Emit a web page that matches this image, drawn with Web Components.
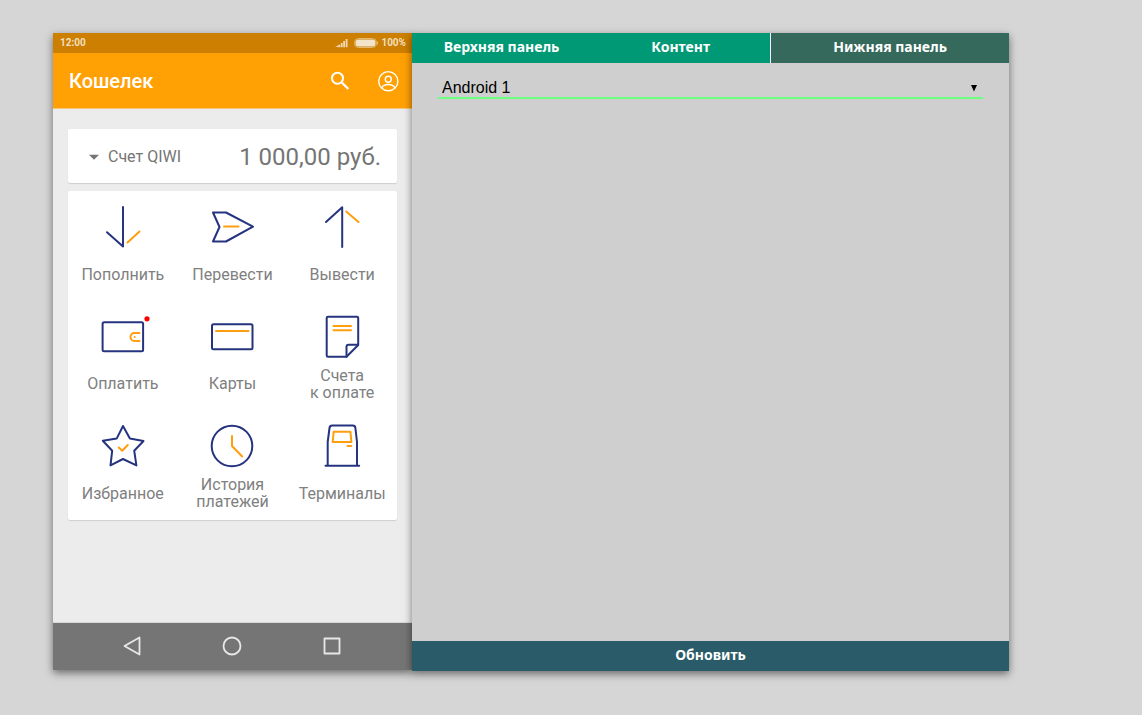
<!DOCTYPE html>
<html lang="ru">
<head>
<meta charset="utf-8">
<title>Кошелек</title>
<style>
  html { background: #d6d6d6; }
  body { margin: 0; font-family: Roboto, "Liberation Sans", sans-serif; }
</style>
</head>
<body>
<skin-editor>
  <phone-preview slot="preview">
    <phone-status slot="top" time="12:00" charge="100%"></phone-status>
    <phone-header slot="top">Кошелек</phone-header>
    <account-card amount="1 000,00 руб.">Счет QIWI</account-card>
    <action-grid>
      <action-tile icon="down">Пополнить</action-tile>
      <action-tile icon="send">Перевести</action-tile>
      <action-tile icon="up">Вывести</action-tile>
      <action-tile icon="wallet">Оплатить</action-tile>
      <action-tile icon="card">Карты</action-tile>
      <action-tile icon="bill">Счета<br>к оплате</action-tile>
      <action-tile icon="star">Избранное</action-tile>
      <action-tile icon="clock">История<br>платежей</action-tile>
      <action-tile icon="terminal">Терминалы</action-tile>
    </action-grid>
    <phone-nav slot="bottom"></phone-nav>
  </phone-preview>
  <settings-panel slot="settings"></settings-panel>
</skin-editor>

<script>
const define = (name, html) => customElements.define(name, class extends HTMLElement {
  connectedCallback() {
    if (this.shadowRoot) return;
    const root = this.attachShadow({ mode: 'open' });
    root.innerHTML = typeof html === 'function' ? html(this) : html;
  }
});

const RESET = `
  *, :host { box-sizing: border-box; }
  button { margin: 0; padding: 0; border: 0; background: none; color: inherit; font: inherit; cursor: pointer; }
  svg { display: block; overflow: visible; }
`;

define('skin-editor', `
  <style>${RESET}
    :host {
      display: grid; grid-template-columns: 359px minmax(0, 1fr);
      min-height: 100vh; padding: 33px 133px 44px 53px;
    }
  </style>
  <slot name="preview"></slot>
  <slot name="settings"></slot>
`);

define('phone-preview', `
  <style>${RESET}
    :host {
      display: flex; flex-direction: column; margin-bottom: 1px;
      background: #ececec; box-shadow: 0 3px 8px rgba(0, 0, 0, .5);
    }
    main { flex: 1; display: flex; flex-direction: column; gap: 8px; padding: 20px 15px; }
  </style>
  <slot name="top"></slot>
  <main><slot></slot></main>
  <slot name="bottom"></slot>
`);

define('phone-status', el => `
  <style>${RESET}
    :host {
      display: flex; align-items: center; gap: 6px; height: 20px; padding: 0 6px 0 7px;
      background: #cc7f00; color: #f3dfbf; font-size: 10px; line-height: 12px; font-weight: 700;
    }
    .time { margin-right: auto; }
    .charge { display: flex; align-items: center; gap: 3px; }
  </style>
  <span class="time">${el.getAttribute('time')}</span>
  <svg width="13" height="10" viewBox="0 0 13 10" fill="#f0d9b3" aria-hidden="true">
    <path d="M0 9l3-1.500V9zM3.200 6.800H5.200v2.400H3.200zM5.800 5h1.800v4.200H5.800zM8.200 3H10v6.200H8.200zM10.700 1h1.800v8.200h-1.800z"/>
  </svg>
  <span class="charge">
    <svg width="24" height="10" viewBox="0 0 24 10" aria-hidden="true">
      <rect x=".5" y=".5" width="22" height="9" rx="4" fill="none" stroke="#e2b973"/>
      <rect x="1.500" y="1.500" width="20" height="7" rx="3" fill="#f3e3c9"/>
      <path d="M23.500 3.500v3" stroke="#e2b973"/>
    </svg>
    <span>${el.getAttribute('charge')}</span>
  </span>
`);

define('phone-header', `
  <style>${RESET}
    :host {
      display: flex; align-items: center; gap: 24px; height: 56px; padding: 0 12px 0 16px;
      background: #ffa005; color: #fff; border-bottom: 1px solid #f5c67c;
    }
    h1 { flex: 1; margin: 0; padding-top: 1px; font-size: 20px; line-height: 28px; font-weight: 500; }
  </style>
  <h1><slot></slot></h1>
  <button type="button" aria-label="Поиск">
    <svg width="24" height="24" viewBox="0 0 24 24" fill="none" stroke="#fff" stroke-width="2">
      <circle cx="9.500" cy="9.200" r="5.500"/><path d="M13.800 13.500l6.500 6.500" stroke-width="2.400"/>
    </svg>
  </button>
  <button type="button" aria-label="Профиль">
    <svg width="24" height="24" viewBox="0 0 24 24" fill="none" stroke="#fff" stroke-width="1.400">
      <circle cx="12.300" cy="12.200" r="9.600"/><circle cx="12.300" cy="10.200" r="3"/>
      <path d="M5.800 18.700c1.200-2.300 3.500-3.200 6.500-3.200s5.300.9 6.500 3.200"/>
    </svg>
  </button>
`);

define('account-card', el => `
  <style>${RESET}
    :host { display: block; background: #fff; border-radius: 2px; box-shadow: 0 1px 1px #cfcfcf; color: #757575; }
    button { display: flex; align-items: center; gap: 8px; width: 100%; height: 54px; padding: 2px 16px 0 21px; }
    .name { font-size: 16px; line-height: 20px; }
    .sum { margin-left: auto; font-size: 24px; line-height: 28px; }
  </style>
  <button type="button">
    <svg width="11" height="6" viewBox="0 0 11 6" aria-hidden="true"><path d="M0 .8h10l-5 5z" fill="#757575"/></svg>
    <span class="name"><slot></slot></span>
    <span class="sum">${el.getAttribute('amount')}</span>
  </button>
`);

define('action-grid', `
  <style>${RESET}
    :host {
      display: grid; grid-template-columns: repeat(3, minmax(0, 1fr)); grid-auto-rows: 1fr;
      min-height: 329px; background: #fff; border-radius: 2px; box-shadow: 0 1px 1px #cfcfcf;
    }
  </style>
  <slot></slot>
`);

define('action-tile', el => `
  <style>${RESET}
    :host { display: grid; color: #808080; }
    button { display: flex; flex-direction: column; align-items: center; gap: 5px; padding-top: 12px; }
    .label {
      display: flex; align-items: center; justify-content: center; height: 36px;
      font-size: 16px; line-height: 17px; text-align: center; white-space: nowrap;
    }
  </style>
  <button type="button">
    <line-icon name="${el.getAttribute('icon')}"></line-icon>
    <span class="label"><span><slot></slot></span></span>
  </button>
`);

const ICONS = {
  down: `<path d="M24 4v39.500M8 29.200l16 14.300"/><path class="a" d="M28.500 39.500l12-11"/>`,
  send: `<path d="M5 9.500h13l27 14.200L18 38.500H5l6.500-14.500z"/><path class="a" d="M16 23.500h14.500"/>`,
  up: `<path d="M24.200 44V4.200L8 19"/><path class="a" d="M28.200 8.500L40.500 19"/>`,
  wallet: `<rect x="3.600" y="9.200" width="40.500" height="29" rx="1.500"/>
    <path class="a" d="M40.500 20h-5a4 4 0 0 0 0 8h5"/><circle cx="35.700" cy="24" r="1" fill="#ff9e0f" stroke="none"/>
    <circle cx="48" cy="5.800" r="2.600" fill="#f00" stroke="none"/>`,
  card: `<rect x="4" y="11.200" width="40.500" height="25" rx="1.500"/><path class="a" d="M8 18h32.500"/>`,
  bill: `<path d="M10 3.800h29q1.200 0 1.200 1.200V32L28.500 43.800H10q-1.300 0-1.300-1.300V5.100Q8.700 3.800 10 3.800z"/>
    <path d="M40 31.800h-9.500q-2 0-2 2v10"/><path class="a" d="M15.500 13h17.500M15.500 17.200h17.500"/>`,
  star: `<path d="M24 4l6.900 12.500L44.500 19l-9.300 9.700 2.200 14.700L24 37l-12.500 6.400 1.700-14.700-9.400-10 14-2.300z"/>
    <path class="a" d="M19.800 25.500l3.400 3.200 5.600-5.700"/>`,
  clock: `<circle cx="24" cy="24" r="20.300"/><path class="a" d="M24 14v10l10.200 10.500"/>`,
  terminal: `<path d="M7.500 43.700h33.700M9.700 43.700V20L11.500 6q.3-2.400 2.700-2.400h20.500q2.400 0 2.700 2.400L39 20v23.700"/>
    <path class="a" d="M15.700 9.700h16.700l1 10.300H14.700zM29.500 24h3.700"/>`
};

define('line-icon', el => `
  <style>${RESET}
    :host { display: block; }
    svg { fill: none; stroke: #26347f; stroke-width: 2; stroke-linecap: round; stroke-linejoin: round; }
    .a { stroke: #ff9e0f; }
  </style>
  <svg width="48" height="48" viewBox="0 0 48 48" aria-hidden="true">${ICONS[el.getAttribute('name')]}</svg>
`);

define('phone-nav', `
  <style>${RESET}
    :host {
      display: flex; align-items: center; justify-content: center; gap: 76px; height: 48px;
      padding: 0 1px 1px 0; background: #757575; border-top: 1px solid #d8d8d8;
    }
    svg { fill: none; stroke: #e8e8e8; stroke-width: 1.800; stroke-linejoin: round; }
  </style>
  <button type="button" aria-label="Назад"><svg width="24" height="24" viewBox="0 0 24 24"><path d="M4.500 12l15-8.500v17z"/></svg></button>
  <button type="button" aria-label="Домой"><svg width="24" height="24" viewBox="0 0 24 24"><circle cx="12" cy="12" r="8.500"/></svg></button>
  <button type="button" aria-label="Недавние"><svg width="24" height="24" viewBox="0 0 24 24"><rect x="4.500" y="4.500" width="15" height="15"/></svg></button>
`);

define('settings-panel', `
  <style>${RESET}
    :host {
      display: flex; flex-direction: column; background: #cfcfcf;
      box-shadow: 0 3px 8px rgba(0, 0, 0, .5);
    }
    nav { display: grid; grid-template-columns: 3fr 3fr 4fr; }
    nav button, .update {
      height: 30px; padding-bottom: 2px; color: #fff;
      font: 700 14px/20px "Noto Sans", "Open Sans", sans-serif;
    }
    nav button { background: #009975; }
    nav .active { background: #35695b; border-left: 1px solid #fff; }
    .update { background: #295b68; }
    .fields { flex: 1; padding: 13px 26px; }
    .pick { display: block; position: relative; }
    select {
      display: block; width: 100%; height: 23px; padding: 2px 24px 0 4px; appearance: none;
      border: 0; border-bottom: 2px solid #6dff80; border-radius: 0; background: none;
      color: #000; font: 16px/20px "Liberation Sans", Arial, sans-serif;
    }
    .pick svg { position: absolute; right: 6px; top: 9px; pointer-events: none; }
  </style>
  <nav>
    <button type="button">Верхняя панель</button>
    <button type="button">Контент</button>
    <button type="button" class="active">Нижняя панель</button>
  </nav>
  <div class="fields">
    <label class="pick">
      <select aria-label="Вид панели"><option>Android 1</option></select>
      <svg width="6" height="7" viewBox="0 0 6 7" aria-hidden="true"><path d="M0 0h6L3 6.500z"/></svg>
    </label>
  </div>
  <button type="button" class="update">Обновить</button>
`);
</script>
</body>
</html>
